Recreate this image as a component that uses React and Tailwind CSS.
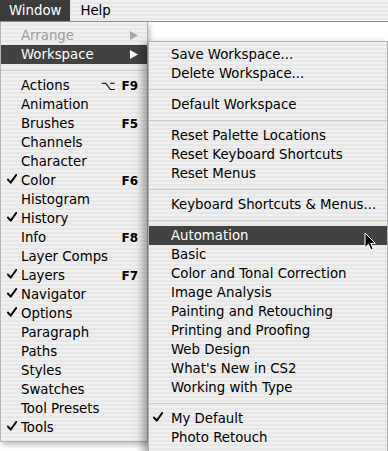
const stripes =
  'bg-[repeating-linear-gradient(180deg,#efefef_0px,#efefef_2px,#e7e7e7_2px,#e7e7e7_4px)]'

const leftItems = [
  { label: 'Arrange', disabled: true, arrow: true },
  { label: 'Workspace', active: true, arrow: true },
  'sep',
  { label: 'Actions', keys: '⌥F9' },
  { label: 'Animation' },
  { label: 'Brushes', keys: 'F5' },
  { label: 'Channels' },
  { label: 'Character' },
  { label: 'Color', checked: true, keys: 'F6' },
  { label: 'Histogram' },
  { label: 'History', checked: true },
  { label: 'Info', keys: 'F8' },
  { label: 'Layer Comps' },
  { label: 'Layers', checked: true, keys: 'F7' },
  { label: 'Navigator', checked: true },
  { label: 'Options', checked: true },
  { label: 'Paragraph' },
  { label: 'Paths' },
  { label: 'Styles' },
  { label: 'Swatches' },
  { label: 'Tool Presets' },
  { label: 'Tools', checked: true },
]

const subItems = [
  { label: 'Save Workspace...' },
  { label: 'Delete Workspace...' },
  'sep',
  { label: 'Default Workspace' },
  'sep',
  { label: 'Reset Palette Locations' },
  { label: 'Reset Keyboard Shortcuts' },
  { label: 'Reset Menus' },
  'sep',
  { label: 'Keyboard Shortcuts & Menus...' },
  'sep',
  { label: 'Automation', active: true },
  { label: 'Basic' },
  { label: 'Color and Tonal Correction' },
  { label: 'Image Analysis' },
  { label: 'Painting and Retouching' },
  { label: 'Printing and Proofing' },
  { label: 'Web Design' },
  { label: "What's New in CS2" },
  { label: 'Working with Type' },
  'sep',
  { label: 'My Default', checked: true },
  { label: 'Photo Retouch' },
]

function Check() {
  return (
    <svg className="w-[10px] h-[10px] -mt-[3px]" viewBox="0 0 10 10">
      <path d="M1 5.6 L3.7 8.7 L9.2 1" fill="none" stroke="currentColor" strokeWidth={2} strokeLinecap="round" strokeLinejoin="round" />
    </svg>
  )
}

function Arrow({ color }) {
  return (
    <svg className="w-[8px] h-[9px]" viewBox="0 0 8 9">
      <path d="M0 0 L8 4.5 L0 9 Z" fill={color} />
    </svg>
  )
}

function Separator() {
  return (
    <div className="h-[12px] flex items-center">
      <div className="w-full h-px bg-[#cbcbcb]" />
    </div>
  )
}

function Row({ item, checkBox }) {
  const color = item.active ? 'text-white' : item.disabled ? 'text-[#9c9c9c]' : 'text-black'
  return (
    <div className={`h-[19px] flex items-center pr-[9px] ${item.active ? 'bg-[#424242]' : ''} ${color}`}>
      <div className={`${checkBox} shrink-0 flex items-center`}>{item.checked && <Check />}</div>
      <span className="flex-1 whitespace-nowrap leading-none">{item.label}</span>
      {item.keys && (
        <span className="text-[12px] font-bold leading-none whitespace-nowrap">
          {item.keys.startsWith('⌥') ? (
            <>
              <span className="font-normal text-[13px] mr-[6px]">⌥</span>
              {item.keys.slice(1)}
            </>
          ) : (
            item.keys
          )}
        </span>
      )}
      {item.arrow && <Arrow color={item.active ? '#ffffff' : '#a8a8a8'} />}
    </div>
  )
}

export default function App() {
  return (
    <div className="relative w-[388px] h-[451px] overflow-hidden bg-white font-['DejaVu_Sans',sans-serif] text-[13.3px]">
      {/* Menu bar */}
      <div className={`h-[22px] flex border-b border-[#8e8e8e] ${stripes}`}>
        <div className="h-full flex items-center px-[9px] bg-[#3c3c3c] text-white">Window</div>
        <div className="h-full flex items-center ml-[10px] text-black">Help</div>
      </div>

      <div className="flex items-start">
        {/* Window menu */}
        <div className={`w-[148px] pt-[4px] pb-[4px] border-x border-b border-[#b4b4b4] shadow-[2px_3px_5px_rgba(0,0,0,0.25)] ${stripes}`}>
          {leftItems.map((item, i) =>
            item === 'sep' ? (
              <Separator key={i} />
            ) : (
              <Row key={i} item={item} checkBox="w-[20px] pl-[6px]" />
            )
          )}
        </div>

        {/* Workspace submenu */}
        <div className="flex-1 pt-[19px]">
          <div className={`relative z-10 pt-[3px] pb-[4px] border border-[#b0b0b0] shadow-[-5px_3px_8px_rgba(0,0,0,0.35)] ${stripes}`}>
            {subItems.map((item, i) =>
              item === 'sep' ? (
                <Separator key={i} />
              ) : (
                <Row key={i} item={item} checkBox="w-[22px] pl-[4px]" />
              )
            )}
          </div>
        </div>
      </div>

      {/* Mouse pointer */}
      <svg className="absolute left-[364px] top-[232px] z-20 w-[13px] h-[20px]" viewBox="0 0 13 20">
        <path d="M1 1 L1 15.5 L4.4 12.3 L6.9 18 L9.2 17 L6.8 11.4 L11.4 11.4 Z" fill="#000" stroke="#fff" strokeWidth={1} strokeLinejoin="round" />
      </svg>
    </div>
  )
}
